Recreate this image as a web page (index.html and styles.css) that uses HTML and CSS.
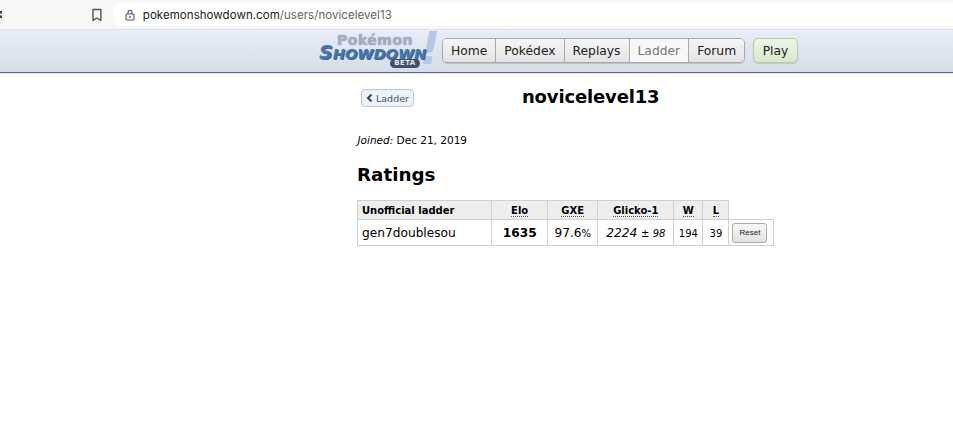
FILE: index.html
```html
<!DOCTYPE html>
<html lang="en">
<head>
  <meta charset="UTF-8" />
  <meta name="viewport" content="width=device-width, initial-scale=1.0"/>
  <title>novicelevel13</title>
  <link rel="stylesheet" href="styles.css">
</head>
<body>
  <div class="browser-bar">
    <span class="browser-dots"></span>
    <svg class="bookmark-icon" width="12" height="14" viewBox="0 0 12 14">
      <path d="M2 1.5h8v11L6 10l-4 2.5z" fill="none" stroke="#555" stroke-width="1.4" stroke-linejoin="round"/>
    </svg>
    <div class="address-box">
      <svg class="lock-icon" width="10" height="12" viewBox="0 0 10 12">
        <rect x="1" y="5" width="8" height="6" rx="1" fill="none" stroke="#555" stroke-width="1.1"/>
        <path d="M3 5V3.4a2 2 0 0 1 4 0V5" fill="none" stroke="#555" stroke-width="1.1"/>
        <circle cx="5" cy="8" r="0.9" fill="#555"/>
      </svg>
      <span class="url-host">pokemonshowdown.com</span><span class="url-path">/users/novicelevel13</span>
    </div>
  </div>

  <header class="site-header">
    <a class="logo">
      <span class="logo-bang">!</span>
      <span class="logo-pokemon">Pokémon</span>
      <span class="logo-showdown"><b>S</b>HOWDOWN</span>
      <span class="logo-beta">BETA</span>
    </a>
    <nav class="nav-group">
      <a class="nav-item">Home</a>
      <a class="nav-item">Pokédex</a>
      <a class="nav-item">Replays</a>
      <a class="nav-item current">Ladder</a>
      <a class="nav-item">Forum</a>
    </nav>
    <a class="play-btn">Play</a>
  </header>

  <main class="container">
    <div class="title-row">
      <a class="back-btn">
        <svg width="7" height="8" viewBox="0 0 7 8"><path d="M5.5 0.6L2 4l3.5 3.4" fill="none" stroke="#33415c" stroke-width="2"/></svg>
        Ladder
      </a>
      <h1>novicelevel13</h1>
    </div>
    <p class="joined"><em>Joined:</em> Dec 21, 2019</p>
    <h2>Ratings</h2>
    <table class="ratings">
      <tr>
        <th class="col-name">Unofficial ladder</th>
        <th class="col-elo"><abbr>Elo</abbr></th>
        <th class="col-gxe"><abbr>GXE</abbr></th>
        <th class="col-glicko"><abbr>Glicko-1</abbr></th>
        <th class="col-w"><abbr>W</abbr></th>
        <th class="col-l"><abbr>L</abbr></th>
        <th class="col-empty"></th>
      </tr>
      <tr>
        <td>gen7doublesou</td>
        <td class="center"><strong>1635</strong></td>
        <td class="center">97.6<small>%</small></td>
        <td class="center"><em>2224</em> <small>± <em>98</em></small></td>
        <td class="center"><small>194</small></td>
        <td class="center"><small>39</small></td>
        <td class="reset-cell"><button class="reset-btn">Reset</button></td>
      </tr>
    </table>
  </main>
</body>
</html>
```

FILE: styles.css
```css
body {
  font-family: "DejaVu Sans", Verdana, sans-serif;
  margin: 0;
  padding: 0;
  background: #fff;
  color: #000;
  overflow: hidden;
}

/* browser chrome */
.browser-bar {
  display: flex;
  align-items: center;
  height: 29px;
  background: #f7f7f7;
  border-bottom: 1px solid #dfe1e6;
}

.browser-dots {
  width: 3px;
  height: 9px;
  margin-left: -1px;
  background: radial-gradient(circle, #444 1.4px, transparent 1.6px) 0 0 / 3px 4.5px;
}

.bookmark-icon {
  margin-left: 89px;
}

.address-box {
  display: flex;
  align-items: center;
  margin-left: 11px;
  width: 838px;
  height: 23px;
  padding-left: 11px;
  background: #fff;
  border-radius: 6px 0 0 6px;
  font-family: "Inter", "Liberation Sans", sans-serif;
  font-size: 11.5px;
  letter-spacing: 0.05px;
}

.lock-icon {
  margin-right: 8px;
}

.url-host {
  color: #222;
}

.url-path {
  color: #666;
}

/* site header */
.site-header {
  display: flex;
  align-items: flex-start;
  height: 42px;
  padding-left: 318px;
  background: linear-gradient(#e8edf8, #d6dde9);
  border-bottom: 1px solid #4d6a93;
  box-shadow: 0 1px 1px rgba(0, 0, 0, 0.1);
}

.logo {
  position: relative;
  display: block;
  width: 124px;
  height: 42px;
}

.logo-pokemon {
  position: absolute;
  left: 19px;
  top: 4px;
  font-size: 14px;
  line-height: 12px;
  font-weight: bold;
  letter-spacing: 0.5px;
  color: #a3aebe;
  text-shadow: 0 0 1px #7f8c9f;
}

.logo-showdown {
  position: absolute;
  left: 1px;
  top: 15px;
  font-size: 14.6px;
  line-height: 14px;
  font-weight: bold;
  font-style: italic;
  color: #3f78b4;
  white-space: nowrap;
  text-shadow: 1px 1px 0 rgba(36, 52, 79, 0.75);
}

.logo-showdown b {
  font-size: 19px;
  line-height: 14px;
}

.logo-bang {
  position: absolute;
  left: 102px;
  top: -1px;
  font-size: 44px;
  line-height: 40px;
  font-weight: bold;
  font-style: italic;
  color: #b4c8e6;
}

.logo-beta {
  position: absolute;
  left: 72px;
  top: 29px;
  width: 30px;
  height: 9px;
  line-height: 9px;
  text-align: center;
  font-size: 7px;
  font-weight: bold;
  letter-spacing: 0.4px;
  color: #e8edf5;
  background: #3f4f6e;
  border-radius: 5px;
}

.nav-group {
  display: flex;
  margin-top: 8px;
  border: 1px solid #a5a9b0;
  border-radius: 5px;
  box-shadow: 0 1px 1px rgba(0, 0, 0, 0.15);
}

.nav-item {
  height: 23px;
  line-height: 25px;
  padding: 0 8px;
  font-size: 12.3px;
  color: #222;
  background: linear-gradient(#f6f6f6, #e3e3e3);
  border-left: 1px solid #a5a9b0;
}

.nav-item:first-child {
  border-left: none;
  border-radius: 4px 0 0 4px;
}

.nav-item:last-child {
  border-radius: 0 4px 4px 0;
}

.nav-item.current {
  color: #777;
  background: #f7f7f7;
}

.play-btn {
  height: 23px;
  line-height: 25px;
  margin: 8px 0 0 8px;
  padding: 0 8.5px;
  font-size: 12.3px;
  color: #222;
  background: linear-gradient(#eef5e6, #d9e8cc);
  border: 1px solid #b4cda4;
  border-radius: 5px;
  box-shadow: 0 1px 1px rgba(0, 0, 0, 0.12);
}

/* profile */
.container {
  width: 417px;
  margin-left: 357px;
}

.title-row {
  display: flex;
  align-items: flex-start;
  padding-top: 13px;
}

.back-btn {
  display: flex;
  align-items: center;
  gap: 3px;
  height: 16px;
  margin: 3px 0 0 4px;
  padding: 0 4px;
  font-size: 9.5px;
  color: #47536b;
  background: #eef2fb;
  border: 1px solid #b8c6e4;
  border-radius: 4px;
}

h1 {
  margin: 0 0 0 108px;
  font-size: 18px;
  letter-spacing: -0.15px;
  line-height: 22px;
}

.joined {
  margin: 25px 0 0 0.5px;
  font-size: 10.5px;
  line-height: 14px;
}

h2 {
  margin: 16px 0 0;
  font-size: 18.3px;
  line-height: 24px;
}

.ratings {
  margin-top: 13px;
  border-collapse: collapse;
  table-layout: fixed;
  width: 417px;
  font-size: 12.2px;
}

.ratings th {
  height: 18px;
  padding: 0 4px;
  font-size: 10px;
  text-align: center;
  background: #eee;
  border: 1px solid #d0d0d0;
}

.ratings th.col-name {
  text-align: left;
}

.ratings th.col-empty {
  background: none;
  border: none;
  border-bottom: 1px solid #d0d0d0;
}

.ratings td {
  height: 24px;
  padding: 1px 4px 0;
  border: 1px solid #d0d0d0;
}

.ratings td.center {
  text-align: center;
}

.ratings td.reset-cell {
  padding: 0 0 0 3px;
}

.ratings small {
  font-size: 10px;
}

.ratings abbr {
  border-bottom: 1px dotted #555;
}

.col-name { width: 125px; }
.col-elo { width: 47px; }
.col-gxe { width: 41px; }
.col-glicko { width: 67px; }
.col-w { width: 20px; }
.col-l { width: 17px; }
.col-empty { width: 36px; }

.reset-btn {
  display: block;
  width: 35px;
  height: 20px;
  padding: 0;
  font-family: "Liberation Sans", Arial, sans-serif;
  font-size: 8px;
  color: #222;
  background: linear-gradient(#f6f6f6, #e3e3e3);
  border: 1px solid #aaa;
  border-radius: 3px;
}
```
